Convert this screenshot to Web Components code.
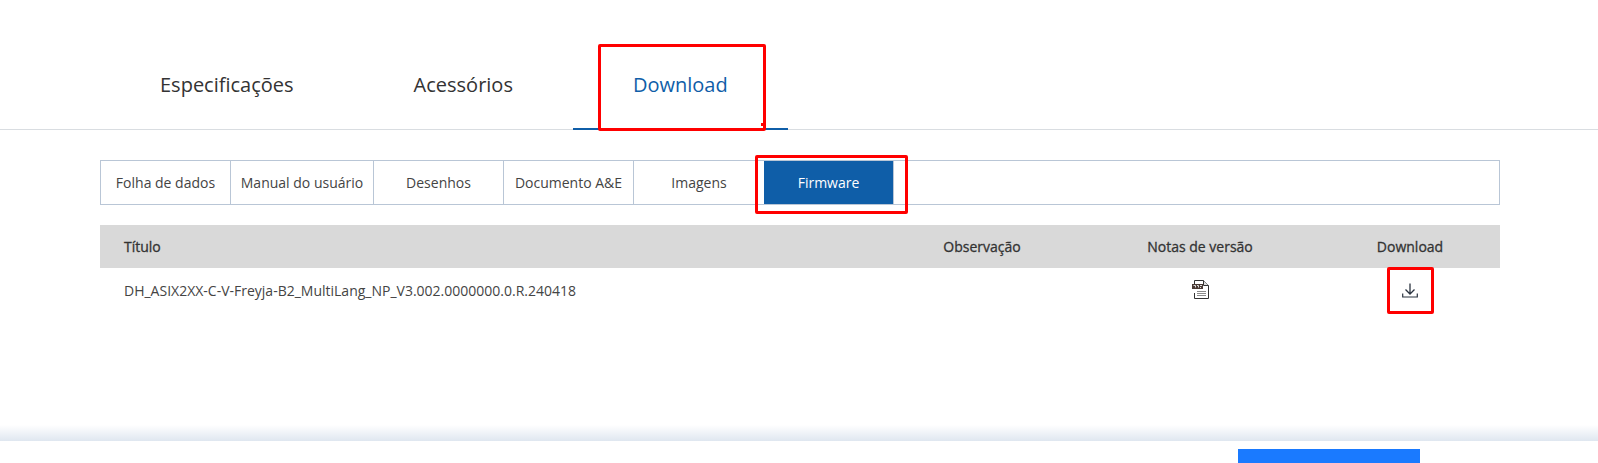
<!DOCTYPE html>
<html lang="pt">
<head>
<meta charset="utf-8">
<title>Download</title>
<style>
	html, body { margin: 0; height: 463px; overflow: hidden; background: #fff; }
	body { font-family: "Open Sans", sans-serif; color: #333; position: relative; }
</style>
</head>
<body>
<product-tabs>
	<tab-item>Especificações</tab-item>
	<tab-item>Acessórios</tab-item>
	<tab-item active>Download</tab-item>
</product-tabs>
<doc-panel>
	<doc-tabs>
		<doc-tab style="--w:130px">Folha de dados</doc-tab>
		<doc-tab style="--w:143px">Manual do usuário</doc-tab>
		<doc-tab style="--w:130px">Desenhos</doc-tab>
		<doc-tab style="--w:130px">Documento A&amp;E</doc-tab>
		<doc-tab style="--w:130px">Imagens</doc-tab>
		<doc-tab style="--w:130px" active>Firmware</doc-tab>
	</doc-tabs>
	<firmware-table title-text="DH_ASIX2XX-C-V-Freyja-B2_MultiLang_NP_V3.002.0000000.0.R.240418"></firmware-table>
</doc-panel>
<page-footer></page-footer>
<red-mark style="left:598px;top:44px;width:168px;height:87px" dot></red-mark>
<red-mark style="left:755px;top:155px;width:153px;height:59px"></red-mark>
<red-mark style="left:1387px;top:267px;width:47px;height:47px"></red-mark>

<script>
	customElements.define('product-tabs', class extends HTMLElement {
		constructor() {
			super();
			this.attachShadow({ mode: 'open' });
			this.shadowRoot.innerHTML = `
				<style>
				:host {
					display: flex;
					height: 130px;
					padding: 44px 0 0 100px;
					box-sizing: border-box;
					border-bottom: 1px solid #d9dde1;
				}
				</style>
				<slot></slot>
			`;
		}
	});

	customElements.define('tab-item', class extends HTMLElement {
		constructor() {
			super();
			this.attachShadow({ mode: 'open' });
			this.shadowRoot.innerHTML = `
				<style>
				:host {
					display: block;
					height: 86px;
					box-sizing: border-box;
					padding: 0 60px;
					font-size: 20px;
					line-height: 82px;
					color: #333;
				}
				:host([active]) {
					color: #0f5ea8;
					border-bottom: 2px solid #0f5ea8;
				}
				</style>
				<slot></slot>
			`;
		}
	});

	customElements.define('doc-panel', class extends HTMLElement {
		constructor() {
			super();
			this.attachShadow({ mode: 'open' });
			this.shadowRoot.innerHTML = `
				<style>
				:host {
					display: flex;
					flex-direction: column;
					gap: 20px;
					padding: 30px 98px 0 100px;
				}
				</style>
				<slot></slot>
			`;
		}
	});

	customElements.define('doc-tabs', class extends HTMLElement {
		constructor() {
			super();
			this.attachShadow({ mode: 'open' });
			this.shadowRoot.innerHTML = `
				<style>
				:host {
					display: flex;
					height: 45px;
					box-sizing: border-box;
					border: 1px solid #b9c6d6;
				}
				</style>
				<slot></slot>
			`;
		}
	});

	customElements.define('doc-tab', class extends HTMLElement {
		constructor() {
			super();
			this.attachShadow({ mode: 'open' });
			this.shadowRoot.innerHTML = `
				<style>
				:host {
					display: flex;
					align-items: center;
					justify-content: center;
					width: var(--w);
					box-sizing: border-box;
					border-right: 1px solid #b9c6d6;
					font-size: 14px;
					color: #444;
					white-space: nowrap;
				}
				:host(:nth-last-child(2)) { border-right: 0; }
				:host([active]) {
					background: #0f5ea8;
					color: #fff;
					border-right: 1px solid #b9c6d6;
				}
				</style>
				<slot></slot>
			`;
		}
	});

	customElements.define('firmware-table', class extends HTMLElement {
		constructor() {
			super();
			this.attachShadow({ mode: 'open' });
			const name = this.getAttribute('title-text') || '';
			this.shadowRoot.innerHTML = `
				<style>
				:host { display: block; font-size: 14px; color: #333; }
				.row {
					display: grid;
					grid-template-columns: 1fr 196px 240px 180px;
					align-items: center;
				}
				.head {
					height: 43px;
					background: #d9d9d9;
					color: #333;
					-webkit-text-stroke: 0.3px #333;
				}
				.body { height: 44px; padding-bottom: 2px; color: #444; }
				.first { padding-left: 24px; }
				.mid { display: flex; justify-content: center; }
				svg { display: block; }
				</style>
				<div class="row head">
					<div class="first">Título</div>
					<div class="mid">Observação</div>
					<div class="mid">Notas de versão</div>
					<div class="mid">Download</div>
				</div>
				<div class="row body">
					<div class="first">${name}</div>
					<div></div>
					<div class="mid">
						<svg width="18" height="19" viewBox="0 0 18 19" style="margin:-2px 0 0 1px">
							<path d="M2.5 .5H11.5L16.5 5.5V18.5H2.5V13" fill="#fff" stroke="#333"/>
							<path d="M2.5 7V.5" stroke="#333"/>
							<path d="M11.5 .5V5.5H16.5" fill="#ddd" stroke="#333"/>
							<rect x="0" y="4" width="11" height="5" fill="#4a3a34"/>
							<path d="M1.5 5.5h2v2M5 5.5h1.5v2M8 5.5h2M8 7.500h1" stroke="#ddd" stroke-width="1" fill="none"/>
							<path d="M5 11.500H14M5 13.500H14M5 15.500H14" stroke="#8a8a8a" stroke-width="1.200"/>
						</svg>
					</div>
					<div class="mid">
						<svg width="16" height="15" viewBox="0 0 16 15" fill="none" stroke="#2b3440" stroke-width="1.300" style="margin-top:1px">
							<path d="M8 .5V10.500M3.500 6.500L8 11L12.500 6.500"/>
							<path d="M.7 10.500V14H15.300V10.500" stroke-width="1.200"/>
						</svg>
					</div>
				</div>
			`;
		}
	});

	customElements.define('page-footer', class extends HTMLElement {
		constructor() {
			super();
			this.attachShadow({ mode: 'open' });
			this.shadowRoot.innerHTML = `
				<style>
				:host {
					position: absolute;
					left: 0;
					right: 0;
					top: 425px;
					height: 38px;
					display: block;
				}
				.fade {
					height: 16px;
					background: linear-gradient(to bottom, #fff, #dfe7f0);
				}
				.bar {
					display: flex;
					justify-content: flex-end;
					padding: 8px 178px 0 0;
				}
				.cta { width: 182px; height: 14px; background: #1a7aff; }
				</style>
				<div class="fade"></div>
				<div class="bar"><div class="cta"></div></div>
			`;
		}
	});

	// the red boxes someone drew over the screenshot
	customElements.define('red-mark', class extends HTMLElement {
		constructor() {
			super();
			this.attachShadow({ mode: 'open' });
			this.shadowRoot.innerHTML = `
				<style>
				:host {
					position: absolute;
					display: block;
					box-sizing: border-box;
					border: 3px solid #ff0000;
					border-radius: 2px;
				}
				:host([dot])::after {
					content: "";
					position: absolute;
					right: 0;
					bottom: 2px;
					width: 2px;
					height: 3px;
					background: #ff0000;
				}
				</style>
			`;
		}
	});
</script>
</body>
</html>
